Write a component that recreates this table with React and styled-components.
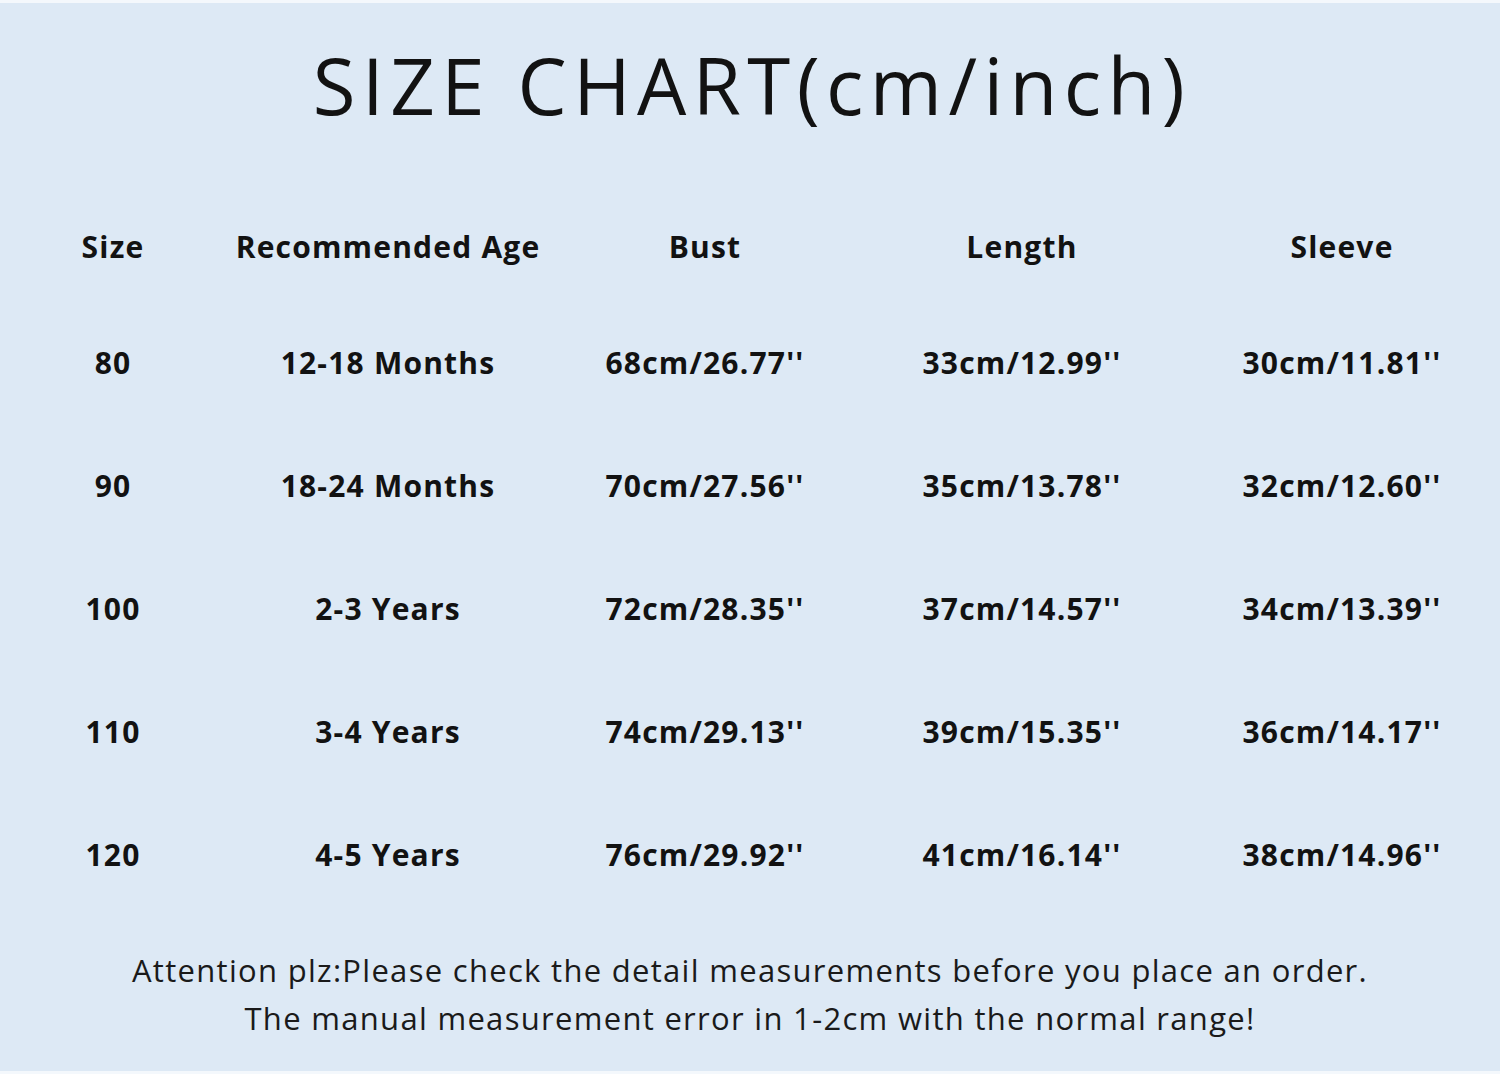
import React from 'react'
import styled, { createGlobalStyle } from 'styled-components'

const GlobalStyle = createGlobalStyle`
    html, body {
        margin: 0;
        padding: 0;
        background: #dde9f5;
    }
`

const Page = styled.div`
    width: 1500px;
    height: 1074px;
    box-sizing: border-box;
    background: #dde9f5;
    border-top: 3px solid #f4f8fc;
    border-bottom: 3px solid #f4f8fc;
    display: flex;
    flex-direction: column;
    align-items: center;
    color: #121212;
`

const Title = styled.h1`
    margin: 28px 0 0 0;
    height: 160px;
    font-family: "Open Sans", "DejaVu Sans", sans-serif;
    font-weight: 400;
    font-size: 78px;
    line-height: 108px;
    letter-spacing: 6.4px;
    transform: translateX(2px);
`

const Table = styled.div`
    width: 1500px;
    display: grid;
    grid-template-columns: 226px 324px 310px 324px 1fr;
    grid-template-rows: 110px repeat(5, 123px);
    align-items: center;
    justify-items: center;
    font-family: "Open Sans", "DejaVu Sans", sans-serif;
    font-weight: 700;
    font-size: 30px;
    letter-spacing: 1.2px;
`

const Cell = styled.div`
    white-space: nowrap;
    text-align: center;
`

const Note = styled.div`
    margin-top: 30px;
    font-family: "Open Sans", "DejaVu Sans", sans-serif;
    font-size: 31px;
    line-height: 48px;
    text-align: center;
    letter-spacing: 1.3px;
    color: #1a1a1a;
`

const headers = ['Size', 'Recommended Age', 'Bust', 'Length', 'Sleeve']

const rows = [
    ['80', '12-18 Months', "68cm/26.77''", "33cm/12.99''", "30cm/11.81''"],
    ['90', '18-24 Months', "70cm/27.56''", "35cm/13.78''", "32cm/12.60''"],
    ['100', '2-3 Years', "72cm/28.35''", "37cm/14.57''", "34cm/13.39''"],
    ['110', '3-4 Years', "74cm/29.13''", "39cm/15.35''", "36cm/14.17''"],
    ['120', '4-5 Years', "76cm/29.92''", "41cm/16.14''", "38cm/14.96''"],
]

function App() {
    return (
        <>
            <GlobalStyle />
            <Page>
                <Title>SIZE CHART(cm/inch)</Title>
                <Table>
                    {headers.map(h => <Cell key={h}>{h}</Cell>)}
                    {rows.map(r => r.map((v, i) => (
                        <Cell key={r[0] + i}>{v}</Cell>
                    )))}
                </Table>
                <Note>
                    Attention plz:Please check the detail measurements before you place an order.<br />
                    The manual measurement error in 1-2cm with the normal range!
                </Note>
            </Page>
        </>
    )
}

export default App
